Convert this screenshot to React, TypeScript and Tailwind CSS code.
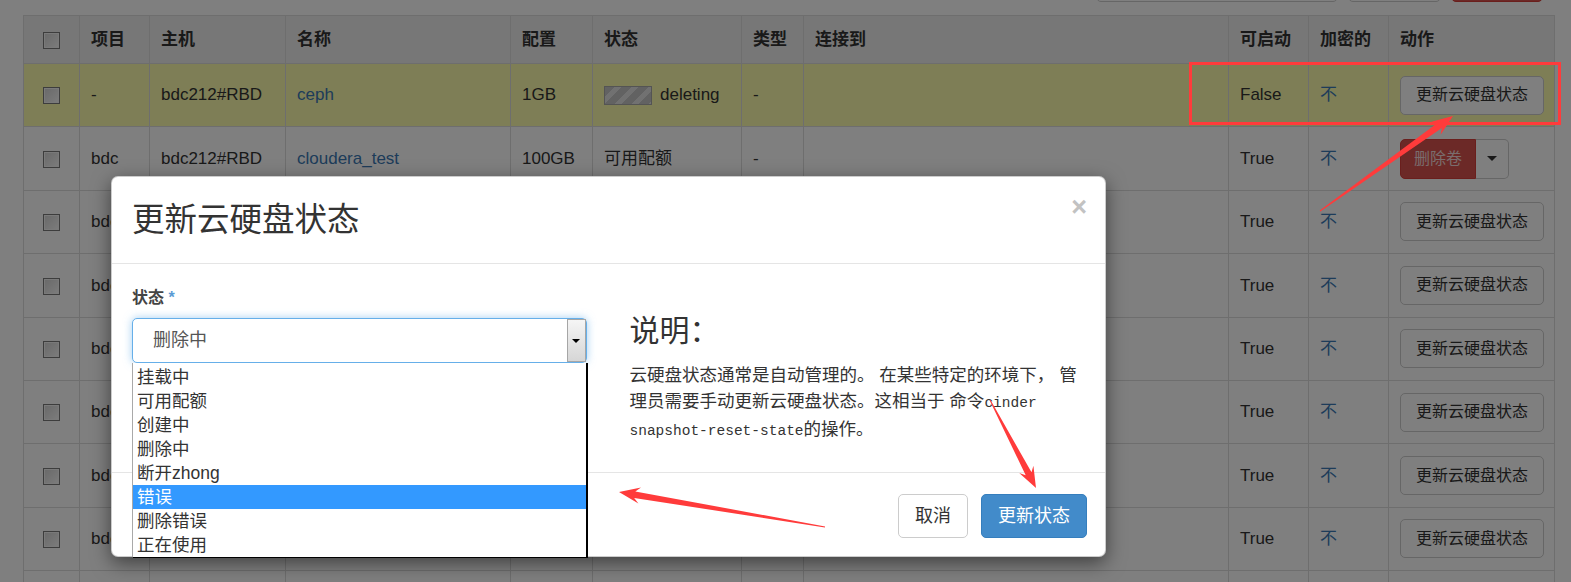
import React from 'react';

type Row = {
  project: string;
  host: string;
  name: string;
  size: string;
  status: string;
  type: string;
  bootable: string;
  highlight?: boolean;
  action: 'update' | 'delete';
};

const rows: Row[] = [
  { project: '-', host: 'bdc212#RBD', name: 'ceph', size: '1GB', status: 'deleting', type: '-', bootable: 'False', highlight: true, action: 'update' },
  { project: 'bdc', host: 'bdc212#RBD', name: 'cloudera_test', size: '100GB', status: '可用配额', type: '-', bootable: 'True', action: 'delete' },
  { project: 'bdc', host: 'bdc212#RBD', name: 'hadoop_data', size: '50GB', status: '可用配额', type: '-', bootable: 'True', action: 'update' },
  { project: 'bdc', host: 'bdc212#RBD', name: 'test_vol', size: '20GB', status: '可用配额', type: '-', bootable: 'True', action: 'update' },
  { project: 'bdc', host: 'bdc212#RBD', name: 'backup', size: '10GB', status: '可用配额', type: '-', bootable: 'True', action: 'update' },
  { project: 'bdc', host: 'bdc212#RBD', name: 'spark_vol', size: '40GB', status: '可用配额', type: '-', bootable: 'True', action: 'update' },
  { project: 'bdc', host: 'bdc212#RBD', name: 'hive_vol', size: '40GB', status: '可用配额', type: '-', bootable: 'True', action: 'update' },
  { project: 'bdc', host: 'bdc212#RBD', name: 'kafka_vol', size: '30GB', status: '可用配额', type: '-', bootable: 'True', action: 'update' },
];

const options = ['挂载中', '可用配额', '创建中', '删除中', '断开zhong', '错误', '删除错误', '正在使用'];

// tapered arrow like the ones a screenshot tool draws
function arrow(x1: number, y1: number, x2: number, y2: number) {
  const L = 21, W = 8, w1 = 3.3, w0 = 0.5, notch = 5;
  const len = Math.hypot(x2 - x1, y2 - y1);
  const ux = (x2 - x1) / len, uy = (y2 - y1) / len;
  const nx = -uy, ny = ux;
  const bx = x2 - ux * L, by = y2 - uy * L;
  const jx = x2 - ux * (L - notch), jy = y2 - uy * (L - notch);
  const pts = [
    [x1 + nx * w0, y1 + ny * w0],
    [jx + nx * w1, jy + ny * w1],
    [bx + nx * W, by + ny * W],
    [x2, y2],
    [bx - nx * W, by - ny * W],
    [jx - nx * w1, jy - ny * w1],
    [x1 - nx * w0, y1 - ny * w0],
  ];
  return pts.map((p) => p[0].toFixed(1) + ',' + p[1].toFixed(1)).join(' ');
}

const Checkbox = () => (
  <span className="inline-block w-[17px] h-[17px] border border-[#7a7a7a] bg-gradient-to-br from-[#d2d2d2] to-[#fafafa] align-middle shadow-[inset_0_0_0_1px_#f4f4f4]" />
);

const Cell = ({ children, className = '' }: { children?: React.ReactNode; className?: string }) => (
  <td className={`border border-[#dddddd] pl-[11px] align-middle ${className}`}>{children}</td>
);

export default function App() {
  return (
    <div className="relative w-[1571px] h-[582px] overflow-hidden bg-white font-['Liberation_Sans','Noto_Sans_CJK_SC',sans-serif] text-[#333]">
      {/* toolbar above the table (scrolled off, only its bottom edge shows) */}
      <div className="flex justify-end items-end gap-[10px] pr-[28px] h-[2px]">
        <div className="shrink-0 w-[242px] h-[40px] border border-[#cccccc] rounded-[5px]" />
        <div className="shrink-0 w-[93px] h-[40px] border border-[#cccccc] rounded-[5px]" />
        <div className="shrink-0 w-[92px] h-[40px] border border-[#d43f3a] bg-[#d9534f] rounded-[5px]" />
      </div>

      <table className="table-fixed border-collapse w-[1531px] ml-[23px] mt-[13px] text-[17px]">
        <thead>
          <tr className="h-[48px] bg-[#eeeeee] text-left">
            <th className="w-[56px] border border-[#dddddd] text-center"><Checkbox /></th>
            <th className="w-[70px] border border-[#dddddd] pl-[11px] font-bold">项目</th>
            <th className="w-[136px] border border-[#dddddd] pl-[11px] font-bold">主机</th>
            <th className="w-[225px] border border-[#dddddd] pl-[11px] font-bold">名称</th>
            <th className="w-[82px] border border-[#dddddd] pl-[11px] font-bold">配置</th>
            <th className="w-[149px] border border-[#dddddd] pl-[11px] font-bold">状态</th>
            <th className="w-[62px] border border-[#dddddd] pl-[11px] font-bold">类型</th>
            <th className="w-[425px] border border-[#dddddd] pl-[11px] font-bold">连接到</th>
            <th className="w-[80px] border border-[#dddddd] pl-[11px] font-bold">可启动</th>
            <th className="w-[80px] border border-[#dddddd] pl-[11px] font-bold">加密的</th>
            <th className="w-[166px] border border-[#dddddd] pl-[11px] font-bold">动作</th>
          </tr>
        </thead>
        <tbody>
          {rows.map((r, i) => (
            <tr key={i} className={`h-[63.4px] ${r.highlight ? 'bg-[#fcfcac]' : 'bg-white'}`}>
              <td className="border border-[#dddddd] text-center align-middle"><Checkbox /></td>
              <Cell>{r.project}</Cell>
              <Cell>{r.host}</Cell>
              <Cell><span className="text-[#3b78b4]">{r.name}</span></Cell>
              <Cell>{r.size}</Cell>
              <Cell>
                {r.status === 'deleting' ? (
                  <span className="flex items-center">
                    <span className="inline-block w-[48px] h-[19px] border border-[#a8a8a8] bg-[image:repeating-linear-gradient(135deg,#c4c4c4_0px,#c4c4c4_7px,#e2e2e2_7px,#e2e2e2_12px)] mr-[8px]" />
                    deleting
                  </span>
                ) : (
                  r.status
                )}
              </Cell>
              <Cell>{r.type}</Cell>
              <Cell />
              <Cell>{r.bootable}</Cell>
              <Cell><span className="text-[#3b78b4]">不</span></Cell>
              <Cell>
                {r.action === 'update' ? (
                  <span className="inline-flex items-center justify-center w-[144px] h-[39px] border border-[#cccccc] rounded-[5px] bg-white text-[16px] text-[#333]">
                    更新云硬盘状态
                  </span>
                ) : (
                  <span className="inline-flex h-[40px]">
                    <span className="flex items-center px-[13px] bg-[#d9534f] border border-[#d43f3a] rounded-l-[5px] text-[16px] text-[#f4dada]">
                      删除卷
                    </span>
                    <span className="flex items-center justify-center w-[33px] border border-l-0 border-[#cccccc] rounded-r-[5px] bg-white">
                      <span className="w-0 h-0 border-l-[5px] border-r-[5px] border-t-[5px] border-l-transparent border-r-transparent border-t-[#333]" />
                    </span>
                  </span>
                )}
              </Cell>
            </tr>
          ))}
          <tr className="h-[63.4px] bg-white">
            <td className="border border-[#dddddd]" />
            <Cell /><Cell /><Cell /><Cell /><Cell /><Cell /><Cell /><Cell /><Cell /><Cell />
          </tr>
        </tbody>
      </table>

      {/* modal backdrop */}
      <div className="absolute inset-0 bg-black/50 z-10" />

      {/* modal */}
      <div className="absolute left-[111px] top-[176px] w-[995px] h-[381px] z-20 flex flex-col bg-white border border-black/20 rounded-[7px] shadow-[0_6px_19px_rgba(0,0,0,0.5)]">
        <div className="h-[87px] shrink-0 flex items-center justify-between pl-5 pr-[18px] border-b border-[#e5e5e5]">
          <h3 className="text-[32.5px] leading-none text-[#333]">更新云硬盘状态</h3>
          <span className="self-start mt-[17px] text-[27px] font-bold leading-none text-[#c2c2c2]">×</span>
        </div>

        <div className="h-[208px] shrink-0 flex gap-[43px] px-5">
          <div className="w-[455px] pt-[22px]">
            <div className="text-[16px] leading-[24px] font-bold text-[#444] mb-[8px]">
              状态 <span className="text-[#5b9bd5]">*</span>
            </div>
            <div className="relative z-10">
              <div className="h-[45px] flex items-stretch justify-between border border-[#66afe9] rounded-[5px] shadow-[0_0_8px_rgba(102,175,233,0.6)] bg-white">
                <span className="flex items-center pl-5 text-[18px] text-[#555]">删除中</span>
                <span className="w-[19px] flex items-center justify-center border border-[#a6a6a6] bg-gradient-to-b from-[#f5f5f5] to-[#d6d6d6]">
                  <span className="w-0 h-0 border-l-[4px] border-r-[4px] border-t-[4px] border-l-transparent border-r-transparent border-t-black" />
                </span>
              </div>
              <ul className="absolute left-0 top-[45px] w-[456px] pt-[2px] bg-white border-l border-l-[#a9a9a9] border-r-2 border-r-black border-b border-b-black">
                {options.map((o) => (
                  <li
                    key={o}
                    className={`h-[24px] leading-[24px] pl-[4px] text-[17.5px] ${o === '错误' ? 'bg-[#3399ff] text-white' : 'text-[#333]'}`}
                  >
                    {o}
                  </li>
                ))}
              </ul>
            </div>
          </div>

          <div className="w-[456px] pt-[49px]">
            <h3 className="text-[30px] leading-[36px] text-[#333] mb-[13px]">说明：</h3>
            <p className="text-[17.5px] leading-[26px] text-[#333]">
              云硬盘状态通常是自动管理的。 在某些特定的环境下， 管理员需要手动更新云硬盘状态。这相当于 命令
              <span className="font-['Liberation_Mono',monospace] text-[14.5px]">cinder snapshot-reset-state</span>
              的操作。
            </p>
          </div>
        </div>

        <div className="h-[84px] shrink-0 flex justify-end items-start gap-[13px] pt-[21px] pr-[18px] border-t border-[#e5e5e5]">
          <button className="h-[44px] px-[16px] border border-[#cccccc] rounded-[5px] bg-white text-[18px] text-[#333]">取消</button>
          <button className="h-[44px] px-[16px] border border-[#357ebd] rounded-[5px] bg-[#428bca] text-[18px] text-white">更新状态</button>
        </div>
      </div>

      {/* red annotations */}
      <svg className="absolute inset-0 z-30 pointer-events-none" width="1571" height="582">
        <rect x="1190.5" y="63.5" width="369" height="60" fill="none" stroke="#ff3b3b" strokeWidth="3" />
        <polygon points={arrow(1320, 211, 1453, 116)} fill="#ff3b3b" />
        <polygon points={arrow(990, 400, 1036, 488)} fill="#ff3b3b" />
        <polygon points={arrow(825, 527, 619, 492)} fill="#ff3b3b" />
      </svg>
    </div>
  );
}
